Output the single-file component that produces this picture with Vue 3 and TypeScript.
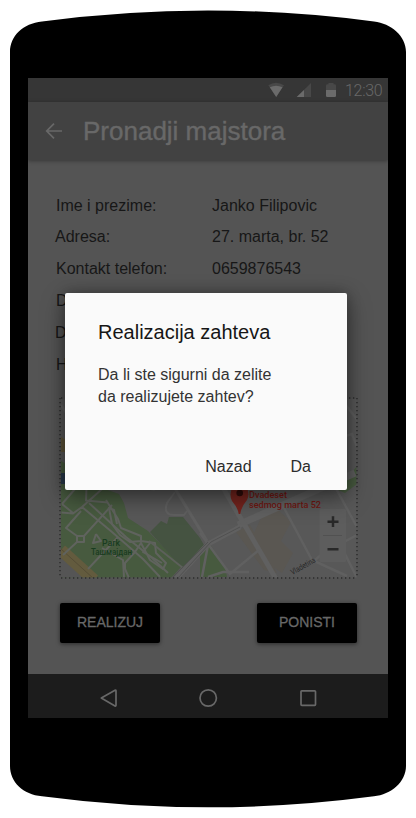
<script setup lang="ts">
interface Row {
  label: string
  value: string
}

const rows: Row[] = [
  { label: 'Ime i prezime:', value: 'Janko Filipovic' },
  { label: 'Adresa:', value: '27. marta, br. 52' },
  { label: 'Kontakt telefon:', value: '0659876543' },
  { label: 'D', value: '' },
  { label: 'D', value: '' },
  { label: 'H', value: '' },
]
</script>

<template>
  <div class="phone">
    <svg class="shell" viewBox="0 0 416 818" width="416" height="818">
      <path d="M10 52C10 36 23 23.500 42 21.500Q208 -.500 374 21.500C391 23.500 406 36 406 52V766C406 782 391 794.500 374 796.300Q208 818.300 42 796.300C23 794.500 10 782 10 766Z" />
    </svg>
    <div class="screen">
      <div class="status">
        <svg width="76" height="18" viewBox="268 81 76 18">
          <path d="M268.300 85.300Q276 80.300 284 85.300L276.200 97Z" fill="#484848" />
          <path d="M269.800 87.300Q276 84 282.500 87.300L276.200 97Z" fill="#6b6b6b" />
          <path d="M296.700 97L311 83V97Z" fill="#484848" />
          <path d="M296.700 97L304 90V97Z" fill="#6b6b6b" />
          <path d="M326 90V85.500Q326 84.300 327.500 84.300H328.500V83H333.500V84.300H334.500Q336 84.300 336 85.500V90Z" fill="#484848" />
          <path d="M326 90H336V95.800Q336 97 334.800 97H327.200Q326 97 326 95.800Z" fill="#6b6b6b" />
        </svg>
        <span class="time">12:30</span>
      </div>
      <header class="bar">
        <svg width="18" height="18" viewBox="0 0 18 18" fill="none" stroke="#686868" stroke-width="1.700">
          <path d="M17 9H2M9 1.700L1.700 9L9 16.300" />
        </svg>
        <h1>Pronadji majstora</h1>
      </header>
      <main class="content">
        <div class="rows">
          <div v-for="(row, i) in rows" :key="i" class="row">
            <span>{{ row.label }}</span><span>{{ row.value }}</span>
          </div>
        </div>
        <svg class="map" width="300" height="182" viewBox="59 397 300 182">
          <defs>
            <clipPath id="area"><rect x="61" y="399" width="295.500" height="178.500" /></clipPath>
          </defs>
          <g clip-path="url(#area)">
            <rect x="60" y="398" width="298" height="180" fill="#585858" />
            <path d="M60 460L102 488L119 494L124 503L128 518L148 531L182 566L170 579H60Z" fill="#475a3f" />
            <path d="M60 549L92 579H60Z" fill="#555" />
            <path d="M60 444V436L66 440V452H60Z" fill="#5e5439" />
            <path d="M60 473H66V484H60Z" fill="#29394b" />
            <path d="M150 532L161 521L167 524L169 517L183 517L200 538L205 547L183 569Z" fill="#455341" />
            <path d="M200 552L209 543L225 566L227 577H200Z" fill="#475a3f" />
            <path d="M338 490L357 466V484L345 493Z" fill="#475a3f" />
            <path d="M260 520L274 506L291 522L281 541L293 553L282 573L270 565L250 542ZM236 532L250 525L277 573L264 570Z" fill="#5a5752" />
            <path d="M61 550L94 580" stroke="#635b3e" stroke-width="12" fill="none" />
            <path d="M61 549L94 579" stroke="#554d36" fill="none" />
            <g fill="none" stroke="#60635e" stroke-width="2" stroke-linejoin="round">
              <path d="M86.500 488L86 500.500L108 502.500M61.500 512.500L73 513.500L82 507L102 489M73 513L62 504M75 489L62 504M82 507L112 532L143 559L160 577M89 503L126 537L152 558L168 573" />
              <path d="M81 511L66 528L77 536H84V542H77V536M77 542L63 555M84 536L112 505M96 534L93 543L101 541L96 534M88 569L118 537M102 548L123 560L124 577" />
              <path d="M106 500L118 519L121 528L141 536V541L130 542L120 535L112 524L109 508L114 510L117 524M141 541L155 543L156 553L166 563L163 569L150 560L141 543L135 552L125 563V569L129 578M150 543L143 552L162 563" />
            </g>
            <path d="M149 541L183 568" stroke="#5d605b" stroke-width="1.800" fill="none" />
            <g fill="none" stroke="#606060">
              <path d="M171 482L207 541" stroke-width="3" />
              <path d="M175 492L167 503Q163 515 174 515H184L187 511" stroke-width="2" />
              <path d="M172 583L208 544L240 527" stroke-width="5" />
              <path d="M238 525L355 473" stroke-width="7" />
              <path d="M222 486L276 579" stroke-width="5" />
              <path d="M284 508L312 560L347 576M200 533L230 574L259 550M208 545L202 577M208 577L223 572H249M315 560L327 550M334 485L357 527M345 554L357 578M338 545L357 535M61 405L110 480M115 478L155 490M342 400L358 421M342 437L352 434L357 447" stroke-width="2.500" />
            </g>
            <path d="M171 579L208 542M177 579L211 542L240 527" stroke="#515151" fill="none" />
            <path d="M238.700 514Q238 508 232 501Q229 495 232 488H247Q250 495 247 500Q241 507 240.300 514Z" fill="#74241e" />
            <circle cx="239.700" cy="493" r="3.300" fill="#2f0c0a" />
            <g class="label red" fill="#193c20">
              <text x="102" y="545.500" font-size="9" textLength="18" lengthAdjust="spacingAndGlyphs">Park</text>
              <text x="91" y="555.300" font-size="8.500" textLength="41" lengthAdjust="spacingAndGlyphs">Ташмајдан</text>
            </g>
            <g class="label red" fill="#6f1712">
              <text x="249" y="497.500" font-size="9" textLength="38" lengthAdjust="spacingAndGlyphs">Dvadeset</text>
              <text x="249" y="508" font-size="9" textLength="72" lengthAdjust="spacingAndGlyphs">sedmog marta 52</text>
            </g>
            <text class="label" x="0" y="0" font-size="8" fill="#292929" textLength="27" lengthAdjust="spacingAndGlyphs" transform="translate(292.500 575) rotate(-29)">Vladetina</text>
            <rect x="319.500" y="509" width="26.500" height="53" rx="1" fill="#5d5d5d" />
            <path d="M323 535.500H342" stroke="#515151" />
            <path d="M327.500 521.700H338.500M333 516.300V527M327.500 549.300H338.500" stroke="#292929" stroke-width="2.500" />
          </g>
          <g fill="none" stroke="#363636" stroke-width="2" stroke-dasharray="1.300 2.700">
            <path d="M60 398V578" /><path d="M357 398V578" /><path d="M61 398H357" /><path d="M61 578H357" />
          </g>
        </svg>
        <div class="actions">
          <button>REALIZUJ</button>
          <button>PONISTI</button>
        </div>
      </main>
      <nav class="nav">
        <svg width="360" height="44" viewBox="0 0 360 44" fill="none" stroke="#686868" stroke-width="1.700" stroke-linejoin="round">
          <path d="M73.300 24L87 16.200Q88 15.700 88 17V31Q88 32.500 87 31.900Z" />
          <circle cx="180.200" cy="24" r="8.200" />
          <rect x="273" y="16.800" width="14.500" height="14.500" rx=".800" />
        </svg>
      </nav>
    </div>
    <div class="dialog" role="dialog">
      <h2>Realizacija zahteva</h2>
      <p>Da li ste sigurni da zelite<br>da realizujete zahtev?</p>
      <div class="choices"><span>Nazad</span><span>Da</span></div>
    </div>
  </div>
</template>

<style>
body {
  margin: 0;
  background: #fff;
}
</style>

<style scoped>
.phone {
  position: relative;
  box-sizing: border-box;
  width: 416px;
  height: 818px;
  padding: 78px 28px 0;
  overflow: hidden;
  font-family: "Liberation Sans", Arial, sans-serif;
}
.shell {
  position: absolute;
  inset: 0;
}
.screen {
  position: relative;
  display: flex;
  flex-direction: column;
  width: 360px;
  height: 640px;
  background: #545454;
}
.status {
  display: flex;
  justify-content: flex-end;
  align-items: center;
  gap: 1px;
  height: 24px;
  padding-right: 6px;
  background: #363636;
}
.time {
  width: 37px;
  color: #686868;
  font: 300 16px/24px Roboto, sans-serif;
  letter-spacing: -0.3px;
  white-space: nowrap;
  padding-top: 2px;
}
.bar {
  display: flex;
  align-items: center;
  gap: 20px;
  height: 58px;
  padding-left: 17px;
  background: #424242;
  box-shadow: 0 1px 4px rgba(0, 0, 0, 0.35);
}
h1 {
  margin: 0;
  color: #686868;
  font-size: 26px;
  font-weight: 400;
  line-height: 30px;
  -webkit-text-stroke: 0.4px #686868;
}
.content {
  display: flex;
  flex-direction: column;
  flex: 1;
  padding: 30px 29px 0 27px;
}
.rows {
  height: 207px;
}
.row {
  display: grid;
  grid-template-columns: 157px 1fr;
  color: #171717;
  font-size: 16px;
  line-height: 32px;
}
.row:nth-child(-n + 2) {
  line-height: 31px;
}
.row:nth-child(3) {
  padding-top: 1px;
}
.row:nth-child(odd) span:first-child,
.row:nth-child(n + 4) span:first-child {
  padding-left: 1px;
}
.row:nth-child(5) span:first-child {
  padding-left: 0;
}
.map {
  display: block;
  margin-left: 4px;
}
.label {
  font-family: Roboto, sans-serif;
}
.red {
  font-weight: 500;
}
.actions {
  display: flex;
  justify-content: space-between;
  padding: 24px 2px 0 5px;
}
button {
  width: 100px;
  height: 40px;
  padding: 0 0 2px;
  border: 0;
  border-radius: 2px;
  background: #000;
  color: #686868;
  font: 14px "Liberation Sans", Arial, sans-serif;
  -webkit-text-stroke: 0.3px #686868;
  box-shadow: 0 1px 4px rgba(0, 0, 0, 0.5);
}
.nav {
  height: 44px;
  background: #1c1c1c;
}
.nav svg {
  display: block;
}
.dialog {
  position: absolute;
  left: 65px;
  top: 293px;
  box-sizing: border-box;
  width: 282px;
  height: 197px;
  padding: 27px 33px 0;
  border-radius: 2px;
  background: #fafafa;
  box-shadow: 0 8px 24px rgba(0, 0, 0, 0.4), 0 0 14px rgba(0, 0, 0, 0.28);
}
h2 {
  margin: 0;
  color: #161616;
  font-size: 20px;
  font-weight: 400;
  line-height: 24px;
}
p {
  margin: 20px 0 0;
  color: #333;
  font-size: 16px;
  line-height: 22px;
  white-space: nowrap;
}
.choices {
  display: flex;
  justify-content: flex-end;
  gap: 39px;
  margin-top: 48px;
  padding-right: 3px;
  color: #2c2c2c;
  font-size: 16px;
  line-height: 22px;
}
</style>
